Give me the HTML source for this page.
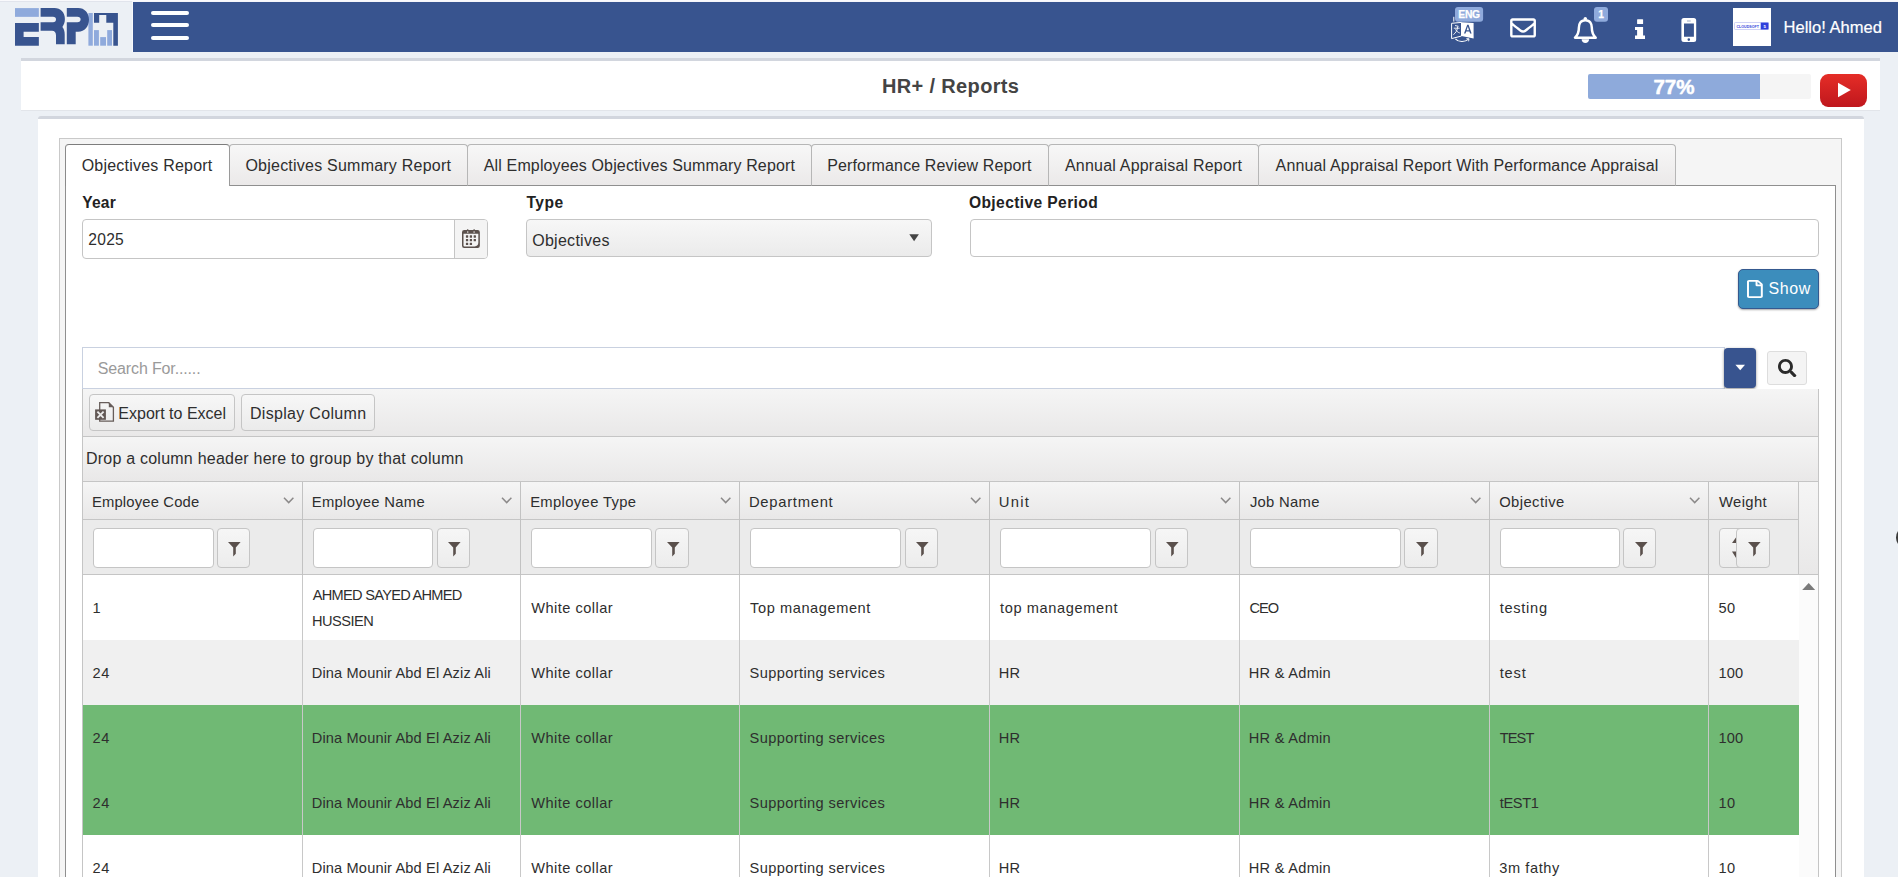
<!DOCTYPE html>
<html><head><meta charset="utf-8"><title>HR+ / Reports</title>
<style>
*{box-sizing:border-box;margin:0;padding:0}
html,body{width:1898px;height:877px;overflow:hidden}
body{background:#ecf0f5;font-family:"Liberation Sans",sans-serif;color:#2e2e2e;position:relative;font-size:16.3px}
.abs{position:absolute}
.t{position:absolute;white-space:pre;line-height:20px;z-index:5}
#topline{left:0;top:0;width:1898px;height:1px;background:#fbfcfd}
#nav{left:133px;top:2px;width:1765px;height:50px;background:#38548f}
.hb{position:absolute;left:151px;width:38px;height:4.4px;border-radius:2.2px;background:#fff}
#titlebar{left:21px;top:58px;width:1859px;height:53px;background:#fff;border-top:3px solid #d2d6de;border-bottom:1px solid #e2e5ea;border-radius:0}
#title{left:0;top:74px;width:1901px;text-align:center;font-weight:bold;font-size:20.6px;color:#444;line-height:24px}
#card{left:38px;top:116px;width:1826px;height:800px;background:#fff;border-top:3px solid #d2d6de;border-radius:3px 3px 0 0}
#tabwrap{left:59px;top:138px;width:1783px;height:800px;background:#f5f5f5;border:1px solid #c9c9c9}
#content{left:65px;top:185px;width:1771px;height:800px;background:#fff;border:1px solid #8f8f8f}
.tab{position:absolute;top:144px;height:42px;border:1px solid #b6b6b6;border-bottom-color:#8f8f8f;border-radius:4px 4px 0 0;background:linear-gradient(#f7f7f7,#ebe9e9);line-height:40px;text-align:center;white-space:nowrap;color:#2e2e2e}
.tab.act{background:#fff;border-color:#7d7d7d #9a9a9a #fff #8a8a8a;border-top-width:1.5px;border-bottom:none;z-index:2}
.lbl{font-weight:bold;font-size:16.2px;color:#222}
.inp{position:absolute;background:#fff;border:1px solid #c5c5c5;border-radius:4px}
</style></head><body>
<div id="topline" class="abs" style="background:#f9f9fc"></div>
<div class="abs" style="left:0;top:1px;width:132px;height:1px;background:#e1e4ec"></div>
<div class="abs" style="left:132px;top:1px;width:1766px;height:1px;background:#f6f6fa"></div>
<div class="abs" style="left:132px;top:2px;width:1px;height:50px;background:#f7f8fb"></div>
<div id="nav" class="abs"></div>
<div class="hb" style="top:10.8px"></div><div class="hb" style="top:22.9px"></div><div class="hb" style="top:35.9px"></div>


<svg class="abs" style="left:0;top:0" width="133" height="54" viewBox="0 0 133 54">
<g fill="#38548f">
<rect x="15" y="8.1" width="23.85" height="8.75" fill="#8faadc"/>
<path d="M15 23.1H38.85V31.8H23.6V37.1H38.85V45.7H15Z"/>
<path d="M40.6 8.1H54.5C60.5 8.1 64.9 12.5 64.9 19C64.9 22.5 63.8 25 62.4 26.9C63.9 28.8 64.7 31 64.7 34.5V44.2H56V35.5C56 32.4 54.6 30.7 52 30.7H40.6V22.2H53C55 22.2 56 21 56 19.5C56 18 55 16.85 53 16.85H40.6Z"/>
<rect x="88.4" y="13" width="4.4" height="32.7" fill="#8faadc"/>
<path d="M66.8 8.1H78.2C84.6 8.1 89 13 89 19.6C89 26.6 84.6 31.8 78.2 31.8H75.7V44.2H66.8V22.2H77.3C79.5 22.2 80.6 21 80.6 19.5C80.6 18 79.5 16.85 77.3 16.85H66.8Z"/>
<path d="M94 13H117.9V45.7H113.3V22.8H106.3V15.1H99.2V22.8H94Z"/>
<rect x="94" y="30.1" width="4.9" height="15.6" fill="#8faadc"/>
<rect x="100.2" y="37.1" width="5.8" height="8.6" fill="#8faadc"/>
<rect x="107.2" y="30.1" width="4.8" height="15.6" fill="#8faadc"/>
</g></svg>

<!-- nav icons -->
<svg class="abs" style="left:1445px;top:2px" width="453" height="50" viewBox="1445 2 453 50">
 <!-- translate -->
 <g fill="none" stroke="#fff" stroke-width="1">
  <path d="M1453.8 16.8V21.6"/>
  <path d="M1451.6 23.3L1461.5 22.4V36L1451.6 38.6Z"/>
  <path d="M1455 25.5L1458.5 26.3M1453.8 28.2H1459.6M1457.6 26.5C1457.6 30.5 1455.6 33 1453.4 34.6M1455.6 29.2C1456.4 31.2 1457.9 32.4 1459.8 33" stroke-width="0.9"/>
  <path d="M1455.4 38.8C1458.5 42.4 1465 42.4 1468.6 39.2" stroke-width="1.1"/>
  <path d="M1466.4 38.6L1469 38.8L1468.6 41.3" stroke-width="0.9"/>
 </g>
 <path d="M1461.5 22.2L1473.6 22.9V38.6L1461.5 35.9Z" fill="#fff"/>
 <path d="M1464 33.6L1467.2 24.8H1468.6L1471.6 33.6H1470.1L1469.4 31.4H1466.2L1465.5 33.6ZM1466.6 30.2H1469L1467.85 26.6Z" fill="#38548f"/>
 <rect x="1455" y="7" width="28.1" height="14.8" rx="3" fill="#8faadc"/>
 <!-- envelope -->
 <g transform="translate(1510.1 15) scale(0.0505)" fill="#fff"><path d="M464 64H48C21.49 64 0 85.49 0 112v288c0 26.51 21.49 48 48 48h416c26.51 0 48-21.49 48-48V112c0-26.51-21.49-48-48-48zm0 48v40.805c-22.422 18.259-58.168 46.651-134.587 106.49-16.841 13.247-50.201 45.072-73.413 44.701-23.208.375-56.579-31.459-73.413-44.701C106.18 199.465 70.425 171.067 48 152.805V112h416zM48 400V214.398c22.914 18.251 55.409 43.862 104.938 82.646 21.857 17.205 60.134 55.186 103.062 54.955 42.717.231 80.509-37.199 103.053-54.947 49.528-38.783 82.032-64.401 104.947-82.653V400H48z"/></g>
 <!-- bell -->
 <g fill="none" stroke="#fff" stroke-width="2.5" stroke-linejoin="round">
  <path d="M1585.3 20.2C1580.6 20.2 1578.9 24 1578.9 27.6C1578.9 32 1577.6 35.4 1575 37.7H1595.7C1593.1 35.4 1591.8 32 1591.8 27.6C1591.8 24 1590 20.2 1585.3 20.2Z"/>
 </g>
 <circle cx="1585.3" cy="18.6" r="1.7" fill="#fff"/>
 <path d="M1581.6 39.2H1589.1C1589.1 41.4 1587.4 43 1585.35 43C1583.3 43 1581.6 41.4 1581.6 39.2Z" fill="#fff"/>
 <rect x="1594" y="7" width="14" height="14.8" rx="3" fill="#8faadc"/>
 <!-- info -->
 <g fill="#fff">
  <rect x="1637.1" y="19.2" width="6" height="4.8" rx="0.6"/>
  <path d="M1635 27H1643.1V35.4H1645V38.9H1635V35.4H1637.1V30H1635Z"/>
 </g>
 <!-- phone -->
 <path fill="#fff" fill-rule="evenodd" d="M1683.9 18.1H1693.7A2.5 2.5 0 0 1 1696.2 20.6V39.6A2.5 2.5 0 0 1 1693.7 42.1H1683.9A2.5 2.5 0 0 1 1681.4 39.6V20.6A2.5 2.5 0 0 1 1683.9 18.1ZM1684 23.5V36.8H1693.9V23.5ZM1687 20.8V21.3H1690.7V20.8ZM1688.8 38.3A1.3 1.3 0 1 0 1688.8 40.9A1.3 1.3 0 1 0 1688.8 38.3Z"/>
 <!-- avatar -->
 <rect x="1733" y="8" width="38" height="38" fill="#fff"/>
 <rect x="1734.5" y="22.5" width="33.8" height="7" rx="0.8" fill="#fff" stroke="#c3c8f4" stroke-width="0.8"/>
 <rect x="1760.7" y="22.6" width="7.8" height="6.9" fill="#2f3fdc"/>
 <text x="1736.5" y="27.55" font-family="Liberation Sans" font-size="4.2" font-weight="bold" fill="#3544dc" textLength="22.4" lengthAdjust="spacingAndGlyphs">CLOUDSOFT</text>
 <text x="1763.4" y="27.7" font-family="Liberation Sans" font-size="4.4" font-weight="bold" fill="#fff">5</text>
</svg>
<div class="t" style="left:1455px;top:7px;width:28px;height:15px;line-height:15.2px;text-align:center;font-size:10.3px;letter-spacing:-0.35px;font-weight:bold;color:#fff;-webkit-text-stroke:0.25px #fff">ENG</div>
<div class="t" style="left:1594px;top:7px;width:14px;height:15px;line-height:15.2px;text-align:center;font-size:10.3px;font-weight:bold;color:#fff;-webkit-text-stroke:0.25px #fff">1</div>
<div class="t" id="hello" style="left:1783.5px;top:18px;font-size:16.55px;color:#fff;line-height:20px;-webkit-text-stroke:0.2px #fff">Hello! Ahmed</div>
<div id="titlebar" class="abs"></div>


<div class="abs" style="left:1588px;top:74px;width:223px;height:25px;background:#f5f5f5;border-radius:2px"></div>
<div class="abs" style="left:1588px;top:74px;width:172px;height:25px;background:#8eaadb;border-radius:2px 0 0 2px;color:#fff;font-weight:bold;font-size:20.6px;line-height:25px;text-align:center;-webkit-text-stroke:0.3px #fff;text-shadow:0 0 1px rgba(255,255,255,.6)">77%</div>
<div class="abs" style="left:1819.5px;top:74px;width:47.5px;height:33px;border-radius:8px/9px;background:linear-gradient(#e52d27,#bf171d)"></div>
<svg class="abs" style="left:1819px;top:74px" width="48" height="33" viewBox="1819 74 48 33"><path d="M1838 82.8L1850.8 90L1838 97.2Z" fill="#fff"/></svg>
<div id="card" class="abs"></div>
<div id="tabwrap" class="abs"></div>
<div id="content" class="abs"></div>
<div class="tab act" style="left:65px;width:165px"></div>
<div class="tab" style="left:229px;width:239px"></div>
<div class="tab" style="left:467px;width:345px"></div>
<div class="tab" style="left:811px;width:238px"></div>
<div class="tab" style="left:1048px;width:211px"></div>
<div class="tab" style="left:1258px;width:418px"></div>
<div class="inp" style="left:82px;top:219px;width:406px;height:40px"></div>
<div class="abs" style="left:454px;top:220px;width:33px;height:38px;background:#f4f4f4;border-left:1px solid #c5c5c5;border-radius:0 3px 3px 0"></div>
<svg class="abs" style="left:461px;top:228px" width="20" height="21" viewBox="461 228 20 21"><g fill="#5b514d">
<path fill-rule="evenodd" d="M464.2 230.1H477.7A2.2 2.2 0 0 1 479.85 232.3V245.8A2.2 2.2 0 0 1 477.7 248H464.2A2.2 2.2 0 0 1 462 245.8V232.3A2.2 2.2 0 0 1 464.2 230.1ZM463.5 233.8V245.4Q463.5 246.5 464.6 246.5H474.6Q478.35 246.3 478.35 242.6V233.8Z"/>
<rect x="466.95" y="229.2" width="1.5" height="2.2" rx="0.5"/><rect x="473.35" y="229.2" width="1.5" height="2.2" rx="0.5"/>
<rect x="465.90" y="235.35" width="2.3" height="2.3" rx="0.3"/><rect x="469.75" y="235.35" width="2.3" height="2.3" rx="0.3"/><rect x="473.65" y="235.35" width="2.3" height="2.3" rx="0.3"/><rect x="465.90" y="239.00" width="2.3" height="2.3" rx="0.3"/><rect x="469.75" y="239.00" width="2.3" height="2.3" rx="0.3"/><rect x="473.65" y="239.00" width="2.3" height="2.3" rx="0.3"/><rect x="465.90" y="242.75" width="2.3" height="2.3" rx="0.3"/><rect x="469.75" y="242.75" width="2.3" height="2.3" rx="0.3"/></g>
<rect x="467.05" y="231.2" width="1.3" height="1.7" fill="#c9c4c2"/><rect x="473.45" y="231.2" width="1.3" height="1.7" fill="#c9c4c2"/>
</svg>
<div class="abs" style="left:526px;top:219px;width:406px;height:38px;border:1px solid #c5c5c5;border-radius:4px;background:linear-gradient(#f7f7f7,#ebebeb)"></div>
<svg class="abs" style="left:908px;top:233px" width="12" height="9" viewBox="0 0 12 9"><path d="M1.3 1.2H10.9L6.1 8.3Z" fill="#444"/></svg>
<div class="inp" style="left:969.5px;top:219px;width:849.5px;height:38px"></div>
<div class="abs" style="left:1738px;top:269px;width:81px;height:40px;border-radius:5px;background:#3c8dbc;border:1px solid #34598f;box-shadow:0 1px 2px rgba(0,0,0,.35)"></div>
<svg class="abs" style="left:1747.2px;top:279.5px" width="15.8" height="18" viewBox="0 -0.1 384 512.1" preserveAspectRatio="none"><path fill="#fff" d="M369.9 97.9L286 14C277 5 264.8-.1 252.1-.1H48C21.5 0 0 21.5 0 48v416c0 26.5 21.5 48 48 48h288c26.5 0 48-21.5 48-48V131.9c0-12.7-5.1-25-14.1-34zM332.1 128H256V51.9l76.1 76.1zM48 464V48h160v104c0 13.3 10.7 24 24 24h104v288H48z"/></svg>
<div class="abs" style="left:82px;top:347px;width:1643px;height:42px;background:#fff;border:1px solid #c9d1e0"></div>
<div class="abs" style="left:1724px;top:348px;width:32px;height:39.5px;border-radius:4px;background:#38548f;box-shadow:0 1px 3px rgba(0,0,0,.45)"></div>
<svg class="abs" style="left:1734px;top:363px" width="12" height="9" viewBox="1734 363 12 9"><path d="M1735.4 364.7H1745L1740.2 370.2Z" fill="#fff"/></svg>
<div class="abs" style="left:1767px;top:351px;width:40px;height:34px;border-radius:3px;background:#f4f4f4;border:1px solid #ddd"></div>
<svg class="abs" style="left:1778.2px;top:359px" width="18.4" height="18.4" viewBox="0 0 512 512"><path fill="#2b2b2b" d="M505 442.7L405.3 343c-4.500-4.500-10.600-7-17-7H372c27.600-35.300 44-79.700 44-128C416 93.100 322.900 0 208 0S0 93.100 0 208s93.100 208 208 208c48.300 0 92.700-16.400 128-44v16.300c0 6.400 2.500 12.500 7 17l99.700 99.700c9.400 9.400 24.600 9.400 33.900 0l28.300-28.300c9.400-9.400 9.400-24.600.100-34zM208 336c-70.700 0-128-57.200-128-128 0-70.700 57.200-128 128-128 70.700 0 128 57.200 128 128 0 70.700-57.200 128-128 128z"/></svg>
<div class="abs" style="left:82px;top:389px;width:1737px;height:48px;background:linear-gradient(#f5f5f5,#e9e8e8);border:1px solid #c5c5c5;border-top:none"></div>
<div class="abs" style="left:82px;top:437px;width:1737px;height:45px;background:linear-gradient(#f5f5f5,#e9e8e8);border:1px solid #c5c5c5;border-top:none"></div>
<div class="abs" style="left:82px;top:482px;width:1737px;height:38px;background:linear-gradient(#f5f5f5,#e9e8e8);border:1px solid #c5c5c5;border-top:none"></div>
<div class="abs" style="left:82px;top:520px;width:1737px;height:55px;background:#ebebeb;border:1px solid #c5c5c5;border-top:none"></div>
<div class="abs" style="left:1798px;top:482px;width:20px;height:92px;background:linear-gradient(#f5f5f5,#e9e8e8);border-left:1px solid #c5c5c5"></div>
<div class="abs" style="left:89px;top:394px;width:146px;height:37px;border:1px solid #c5c5c5;border-radius:4px;background:linear-gradient(#f7f7f7,#ebebeb)"></div>
<div class="abs" style="left:241px;top:394px;width:134px;height:37px;border:1px solid #c5c5c5;border-radius:4px;background:linear-gradient(#f7f7f7,#ebebeb)"></div>
<svg class="abs" style="left:94px;top:401px" width="21" height="22" viewBox="94 401 21 22">
<path d="M99.7 402.7H108.8L113.4 407.3V421.2H99.7Z" fill="none" stroke="#675d5a" stroke-width="1.3"/>
<path d="M108.8 402.4L113.7 407.3H108.8Z" fill="#675d5a"/>
<rect x="95.1" y="409.4" width="10.8" height="10.4" fill="#625855"/>
<path d="M97.4 411.6L103.6 417.8M103.6 411.6L97.4 417.8" stroke="#ececec" stroke-width="1.9"/></svg>
<div class="abs" style="left:83px;top:575px;width:1716px;height:65px;background:#fff"></div>
<div class="abs" style="left:83px;top:640px;width:1716px;height:65px;background:#f0f0f0"></div>
<div class="abs" style="left:83px;top:705px;width:1716px;height:65px;background:#70b974"></div>
<div class="abs" style="left:83px;top:770px;width:1716px;height:65px;background:#70b974"></div>
<div class="abs" style="left:83px;top:835px;width:1716px;height:65px;background:#fff"></div>
<div class="abs" style="left:1799px;top:575px;width:19px;height:310px;background:#fbfbfb"></div>
<div class="abs" style="left:1818px;top:575px;width:1px;height:310px;background:#c5c5c5"></div>
<div class="abs" style="left:82px;top:575px;width:1px;height:310px;background:#c5c5c5"></div>
<svg class="abs" style="left:1800px;top:581px" width="16" height="11" viewBox="1800 581 16 11"><path d="M1802.2 589.9H1815.2L1808.7 582.9Z" fill="#7a7a7a"/></svg>
<div class="abs" style="left:302px;top:482px;width:1px;height:93px;background:#c2c2c2"></div>
<div class="abs" style="left:302px;top:575px;width:1px;height:310px;background:#c8c8c8"></div>
<div class="abs" style="left:520px;top:482px;width:1px;height:93px;background:#c2c2c2"></div>
<div class="abs" style="left:520px;top:575px;width:1px;height:310px;background:#c8c8c8"></div>
<div class="abs" style="left:739px;top:482px;width:1px;height:93px;background:#c2c2c2"></div>
<div class="abs" style="left:739px;top:575px;width:1px;height:310px;background:#c8c8c8"></div>
<div class="abs" style="left:989px;top:482px;width:1px;height:93px;background:#c2c2c2"></div>
<div class="abs" style="left:989px;top:575px;width:1px;height:310px;background:#c8c8c8"></div>
<div class="abs" style="left:1239px;top:482px;width:1px;height:93px;background:#c2c2c2"></div>
<div class="abs" style="left:1239px;top:575px;width:1px;height:310px;background:#c8c8c8"></div>
<div class="abs" style="left:1489px;top:482px;width:1px;height:93px;background:#c2c2c2"></div>
<div class="abs" style="left:1489px;top:575px;width:1px;height:310px;background:#c8c8c8"></div>
<div class="abs" style="left:1708px;top:482px;width:1px;height:93px;background:#c2c2c2"></div>
<div class="abs" style="left:1708px;top:575px;width:1px;height:310px;background:#c8c8c8"></div>
<svg class="abs" style="left:282.8px;top:496px" width="12" height="9" viewBox="0 0 12 9"><path d="M1 1.7L5.7 6.6L10.4 1.7" fill="none" stroke="#8c8a8a" stroke-width="1.5"/></svg>
<svg class="abs" style="left:501.2px;top:496px" width="12" height="9" viewBox="0 0 12 9"><path d="M1 1.7L5.7 6.6L10.4 1.7" fill="none" stroke="#8c8a8a" stroke-width="1.5"/></svg>
<svg class="abs" style="left:720.0px;top:496px" width="12" height="9" viewBox="0 0 12 9"><path d="M1 1.7L5.7 6.6L10.4 1.7" fill="none" stroke="#8c8a8a" stroke-width="1.5"/></svg>
<svg class="abs" style="left:969.9px;top:496px" width="12" height="9" viewBox="0 0 12 9"><path d="M1 1.7L5.7 6.6L10.4 1.7" fill="none" stroke="#8c8a8a" stroke-width="1.5"/></svg>
<svg class="abs" style="left:1219.8px;top:496px" width="12" height="9" viewBox="0 0 12 9"><path d="M1 1.7L5.7 6.6L10.4 1.7" fill="none" stroke="#8c8a8a" stroke-width="1.5"/></svg>
<svg class="abs" style="left:1469.6px;top:496px" width="12" height="9" viewBox="0 0 12 9"><path d="M1 1.7L5.7 6.6L10.4 1.7" fill="none" stroke="#8c8a8a" stroke-width="1.5"/></svg>
<svg class="abs" style="left:1688.8px;top:496px" width="12" height="9" viewBox="0 0 12 9"><path d="M1 1.7L5.7 6.6L10.4 1.7" fill="none" stroke="#8c8a8a" stroke-width="1.5"/></svg>
<div class="inp" style="left:93.0px;top:528px;width:120.5px;height:39.5px"></div>
<div class="abs" style="left:217.1px;top:528px;width:33.3px;height:39.5px;border:1px solid #c5c5c5;border-radius:4px;background:linear-gradient(#f6f6f6,#ececec)"></div>
<svg class="abs" style="left:228.4px;top:541.8px" width="13" height="15" viewBox="0 0 13 15"><path d="M0 0H12.6L7.8 5.6V11.8L5.2 14.5V5.6Z" fill="#5a504c"/></svg>
<div class="inp" style="left:312.8px;top:528px;width:120.5px;height:39.5px"></div>
<div class="abs" style="left:436.9px;top:528px;width:33.3px;height:39.5px;border:1px solid #c5c5c5;border-radius:4px;background:linear-gradient(#f6f6f6,#ececec)"></div>
<svg class="abs" style="left:448.2px;top:541.8px" width="13" height="15" viewBox="0 0 13 15"><path d="M0 0H12.6L7.8 5.6V11.8L5.2 14.5V5.6Z" fill="#5a504c"/></svg>
<div class="inp" style="left:531.2px;top:528px;width:120.5px;height:39.5px"></div>
<div class="abs" style="left:655.3px;top:528px;width:33.3px;height:39.5px;border:1px solid #c5c5c5;border-radius:4px;background:linear-gradient(#f6f6f6,#ececec)"></div>
<svg class="abs" style="left:666.6px;top:541.8px" width="13" height="15" viewBox="0 0 13 15"><path d="M0 0H12.6L7.8 5.6V11.8L5.2 14.5V5.6Z" fill="#5a504c"/></svg>
<div class="inp" style="left:750.0px;top:528px;width:151px;height:39.5px"></div>
<div class="abs" style="left:904.6px;top:528px;width:33.3px;height:39.5px;border:1px solid #c5c5c5;border-radius:4px;background:linear-gradient(#f6f6f6,#ececec)"></div>
<svg class="abs" style="left:915.9px;top:541.8px" width="13" height="15" viewBox="0 0 13 15"><path d="M0 0H12.6L7.8 5.6V11.8L5.2 14.5V5.6Z" fill="#5a504c"/></svg>
<div class="inp" style="left:999.9px;top:528px;width:151px;height:39.5px"></div>
<div class="abs" style="left:1154.5px;top:528px;width:33.3px;height:39.5px;border:1px solid #c5c5c5;border-radius:4px;background:linear-gradient(#f6f6f6,#ececec)"></div>
<svg class="abs" style="left:1165.8px;top:541.8px" width="13" height="15" viewBox="0 0 13 15"><path d="M0 0H12.6L7.8 5.6V11.8L5.2 14.5V5.6Z" fill="#5a504c"/></svg>
<div class="inp" style="left:1249.8px;top:528px;width:151px;height:39.5px"></div>
<div class="abs" style="left:1404.4px;top:528px;width:33.3px;height:39.5px;border:1px solid #c5c5c5;border-radius:4px;background:linear-gradient(#f6f6f6,#ececec)"></div>
<svg class="abs" style="left:1415.7px;top:541.8px" width="13" height="15" viewBox="0 0 13 15"><path d="M0 0H12.6L7.8 5.6V11.8L5.2 14.5V5.6Z" fill="#5a504c"/></svg>
<div class="inp" style="left:1499.6px;top:528px;width:120px;height:39.5px"></div>
<div class="abs" style="left:1623.2px;top:528px;width:33.3px;height:39.5px;border:1px solid #c5c5c5;border-radius:4px;background:linear-gradient(#f6f6f6,#ececec)"></div>
<svg class="abs" style="left:1634.5px;top:541.8px" width="13" height="15" viewBox="0 0 13 15"><path d="M0 0H12.6L7.8 5.6V11.8L5.2 14.5V5.6Z" fill="#5a504c"/></svg>
<div class="abs" style="left:1719px;top:528px;width:24px;height:39.5px;border:1px solid #c5c5c5;border-radius:4px 0 0 4px;background:linear-gradient(#f6f6f6,#ececec)"></div>
<svg class="abs" style="left:1729px;top:536px" width="8" height="24" viewBox="0 0 8 24"><path d="M7.5 0.8L3 7H7.5ZM7.5 22.7L3 15.4H7.5Z" fill="#5a504c"/></svg>
<div class="abs" style="left:1736.4px;top:528px;width:33.3px;height:39.5px;border:1px solid #c5c5c5;border-radius:4px;background:linear-gradient(#f6f6f6,#ececec)"></div>
<svg class="abs" style="left:1747.8px;top:541.8px" width="13" height="15" viewBox="0 0 13 15"><path d="M0 0H12.6L7.8 5.6V11.8L5.2 14.5V5.6Z" fill="#5a504c"/></svg>
<div class="abs" style="left:1896.4px;top:526px;width:24px;height:23px;border-radius:12px;background:#3a3a3a"></div>

<!-- texts -->
<div class="t" style="left:881.94px;top:76.00px;font-size:20px;font-weight:bold;color:#444;letter-spacing:0.354px">HR+ / Reports</div>
<div class="t" style="left:81.64px;top:155.50px;font-size:16px;color:#2e2e2e;letter-spacing:0.218px">Objectives Report</div>
<div class="t" style="left:245.44px;top:155.50px;font-size:16px;color:#2e2e2e;letter-spacing:0.225px">Objectives Summary Report</div>
<div class="t" style="left:483.80px;top:155.50px;font-size:16px;color:#2e2e2e;letter-spacing:0.137px">All Employees Objectives Summary Report</div>
<div class="t" style="left:827.25px;top:155.50px;font-size:16px;color:#2e2e2e;letter-spacing:0.132px">Performance Review Report</div>
<div class="t" style="left:1065.00px;top:155.50px;font-size:16px;color:#2e2e2e;letter-spacing:0.202px">Annual Appraisal Report</div>
<div class="t" style="left:1275.60px;top:155.50px;font-size:16px;color:#2e2e2e;letter-spacing:0.151px">Annual Appraisal Report With Performance Appraisal</div>
<div class="t" style="left:82.20px;top:192.50px;font-size:15.6px;font-weight:bold;color:#222;letter-spacing:0.237px">Year</div>
<div class="t" style="left:526.40px;top:192.50px;font-size:15.6px;font-weight:bold;color:#222;letter-spacing:0.543px">Type</div>
<div class="t" style="left:968.95px;top:192.50px;font-size:15.6px;font-weight:bold;color:#222;letter-spacing:0.384px">Objective Period</div>
<div class="t" style="left:88.35px;top:229.50px;font-size:15.6px;color:#2e2e2e;letter-spacing:0.241px">2025</div>
<div class="t" style="left:532.24px;top:230.50px;font-size:16px;color:#2e2e2e;letter-spacing:0.273px">Objectives</div>
<div class="t" style="left:1768.44px;top:278.50px;font-size:16px;color:#fff;letter-spacing:0.576px">Show</div>
<div class="t" style="left:97.84px;top:358.50px;font-size:16px;color:#9a9a9a;letter-spacing:-0.145px">Search For......</div>
<div class="t" style="left:118.35px;top:403.50px;font-size:16px;color:#2e2e2e;letter-spacing:0.010px">Export to Excel</div>
<div class="t" style="left:249.95px;top:403.50px;font-size:16px;color:#2e2e2e;letter-spacing:0.315px">Display Column</div>
<div class="t" style="left:85.95px;top:448.50px;font-size:16px;color:#2e2e2e;letter-spacing:0.229px">Drop a column header here to group by that column</div>
<div class="t" style="left:91.95px;top:492.00px;font-size:14.8px;color:#2e2e2e;letter-spacing:0.166px">Employee Code</div>
<div class="t" style="left:311.75px;top:492.00px;font-size:14.8px;color:#2e2e2e;letter-spacing:0.292px">Employee Name</div>
<div class="t" style="left:530.15px;top:492.00px;font-size:14.8px;color:#2e2e2e;letter-spacing:0.347px">Employee Type</div>
<div class="t" style="left:748.95px;top:492.00px;font-size:14.8px;color:#2e2e2e;letter-spacing:0.720px">Department</div>
<div class="t" style="left:998.85px;top:492.00px;font-size:14.8px;color:#2e2e2e;letter-spacing:1.200px">Unit</div>
<div class="t" style="left:1249.90px;top:492.00px;font-size:14.8px;color:#2e2e2e;letter-spacing:0.298px">Job Name</div>
<div class="t" style="left:1499.18px;top:492.00px;font-size:14.8px;color:#2e2e2e;letter-spacing:0.421px">Objective</div>
<div class="t" style="left:1718.90px;top:492.00px;font-size:14.8px;color:#2e2e2e;letter-spacing:0.409px">Weight</div>
<div class="t" style="left:92.59px;top:598.00px;font-size:14.6px;color:#2e2e2e;letter-spacing:0.000px">1</div>
<div class="t" style="left:531.30px;top:598.00px;font-size:14.6px;color:#2e2e2e;letter-spacing:0.463px">White collar</div>
<div class="t" style="left:750.10px;top:598.00px;font-size:14.6px;color:#2e2e2e;letter-spacing:0.573px">Top management</div>
<div class="t" style="left:1000.00px;top:598.00px;font-size:14.6px;color:#2e2e2e;letter-spacing:0.615px">top management</div>
<div class="t" style="left:1249.39px;top:598.00px;font-size:14.6px;color:#2e2e2e;letter-spacing:-0.942px">CEO</div>
<div class="t" style="left:1499.70px;top:598.00px;font-size:14.6px;color:#2e2e2e;letter-spacing:0.722px">testing</div>
<div class="t" style="left:1718.39px;top:598.00px;font-size:14.6px;color:#2e2e2e;letter-spacing:0.607px">50</div>
<div class="t" style="left:92.59px;top:663.00px;font-size:14.6px;color:#2e2e2e;letter-spacing:0.607px">24</div>
<div class="t" style="left:311.76px;top:663.00px;font-size:14.6px;color:#2e2e2e;letter-spacing:0.148px">Dina Mounir Abd El Aziz Ali</div>
<div class="t" style="left:531.30px;top:663.00px;font-size:14.6px;color:#2e2e2e;letter-spacing:0.463px">White collar</div>
<div class="t" style="left:749.59px;top:663.00px;font-size:14.6px;color:#2e2e2e;letter-spacing:0.393px">Supporting services</div>
<div class="t" style="left:998.86px;top:663.00px;font-size:14.6px;color:#2e2e2e;letter-spacing:0.175px">HR</div>
<div class="t" style="left:1248.76px;top:663.00px;font-size:14.6px;color:#2e2e2e;letter-spacing:0.276px">HR &amp; Admin</div>
<div class="t" style="left:1499.70px;top:663.00px;font-size:14.6px;color:#2e2e2e;letter-spacing:0.866px">test</div>
<div class="t" style="left:1718.39px;top:663.00px;font-size:14.6px;color:#2e2e2e;letter-spacing:0.241px">100</div>
<div class="t" style="left:92.59px;top:728.00px;font-size:14.6px;color:#2e2e2e;letter-spacing:0.607px">24</div>
<div class="t" style="left:311.76px;top:728.00px;font-size:14.6px;color:#2e2e2e;letter-spacing:0.148px">Dina Mounir Abd El Aziz Ali</div>
<div class="t" style="left:531.30px;top:728.00px;font-size:14.6px;color:#2e2e2e;letter-spacing:0.463px">White collar</div>
<div class="t" style="left:749.59px;top:728.00px;font-size:14.6px;color:#2e2e2e;letter-spacing:0.393px">Supporting services</div>
<div class="t" style="left:998.86px;top:728.00px;font-size:14.6px;color:#2e2e2e;letter-spacing:0.175px">HR</div>
<div class="t" style="left:1248.76px;top:728.00px;font-size:14.6px;color:#2e2e2e;letter-spacing:0.276px">HR &amp; Admin</div>
<div class="t" style="left:1499.70px;top:728.00px;font-size:14.6px;color:#2e2e2e;letter-spacing:-0.856px">TEST</div>
<div class="t" style="left:1718.39px;top:728.00px;font-size:14.6px;color:#2e2e2e;letter-spacing:0.241px">100</div>
<div class="t" style="left:92.59px;top:793.00px;font-size:14.6px;color:#2e2e2e;letter-spacing:0.607px">24</div>
<div class="t" style="left:311.76px;top:793.00px;font-size:14.6px;color:#2e2e2e;letter-spacing:0.148px">Dina Mounir Abd El Aziz Ali</div>
<div class="t" style="left:531.30px;top:793.00px;font-size:14.6px;color:#2e2e2e;letter-spacing:0.463px">White collar</div>
<div class="t" style="left:749.59px;top:793.00px;font-size:14.6px;color:#2e2e2e;letter-spacing:0.393px">Supporting services</div>
<div class="t" style="left:998.86px;top:793.00px;font-size:14.6px;color:#2e2e2e;letter-spacing:0.175px">HR</div>
<div class="t" style="left:1248.76px;top:793.00px;font-size:14.6px;color:#2e2e2e;letter-spacing:0.276px">HR &amp; Admin</div>
<div class="t" style="left:1499.70px;top:793.00px;font-size:14.6px;color:#2e2e2e;letter-spacing:-0.333px">tEST1</div>
<div class="t" style="left:1718.39px;top:793.00px;font-size:14.6px;color:#2e2e2e;letter-spacing:0.607px">10</div>
<div class="t" style="left:92.59px;top:858.00px;font-size:14.6px;color:#2e2e2e;letter-spacing:0.607px">24</div>
<div class="t" style="left:311.76px;top:858.00px;font-size:14.6px;color:#2e2e2e;letter-spacing:0.148px">Dina Mounir Abd El Aziz Ali</div>
<div class="t" style="left:531.30px;top:858.00px;font-size:14.6px;color:#2e2e2e;letter-spacing:0.463px">White collar</div>
<div class="t" style="left:749.59px;top:858.00px;font-size:14.6px;color:#2e2e2e;letter-spacing:0.393px">Supporting services</div>
<div class="t" style="left:998.86px;top:858.00px;font-size:14.6px;color:#2e2e2e;letter-spacing:0.175px">HR</div>
<div class="t" style="left:1248.76px;top:858.00px;font-size:14.6px;color:#2e2e2e;letter-spacing:0.276px">HR &amp; Admin</div>
<div class="t" style="left:1499.19px;top:858.00px;font-size:14.6px;color:#2e2e2e;letter-spacing:0.596px">3m fathy</div>
<div class="t" style="left:1718.39px;top:858.00px;font-size:14.6px;color:#2e2e2e;letter-spacing:0.607px">10</div>
<div class="t" style="left:312.80px;top:585.00px;font-size:14.6px;color:#2e2e2e;letter-spacing:-0.724px">AHMED SAYED AHMED</div>
<div class="t" style="left:311.96px;top:611.00px;font-size:14.6px;color:#2e2e2e;letter-spacing:-0.518px">HUSSIEN</div>
</body></html>
